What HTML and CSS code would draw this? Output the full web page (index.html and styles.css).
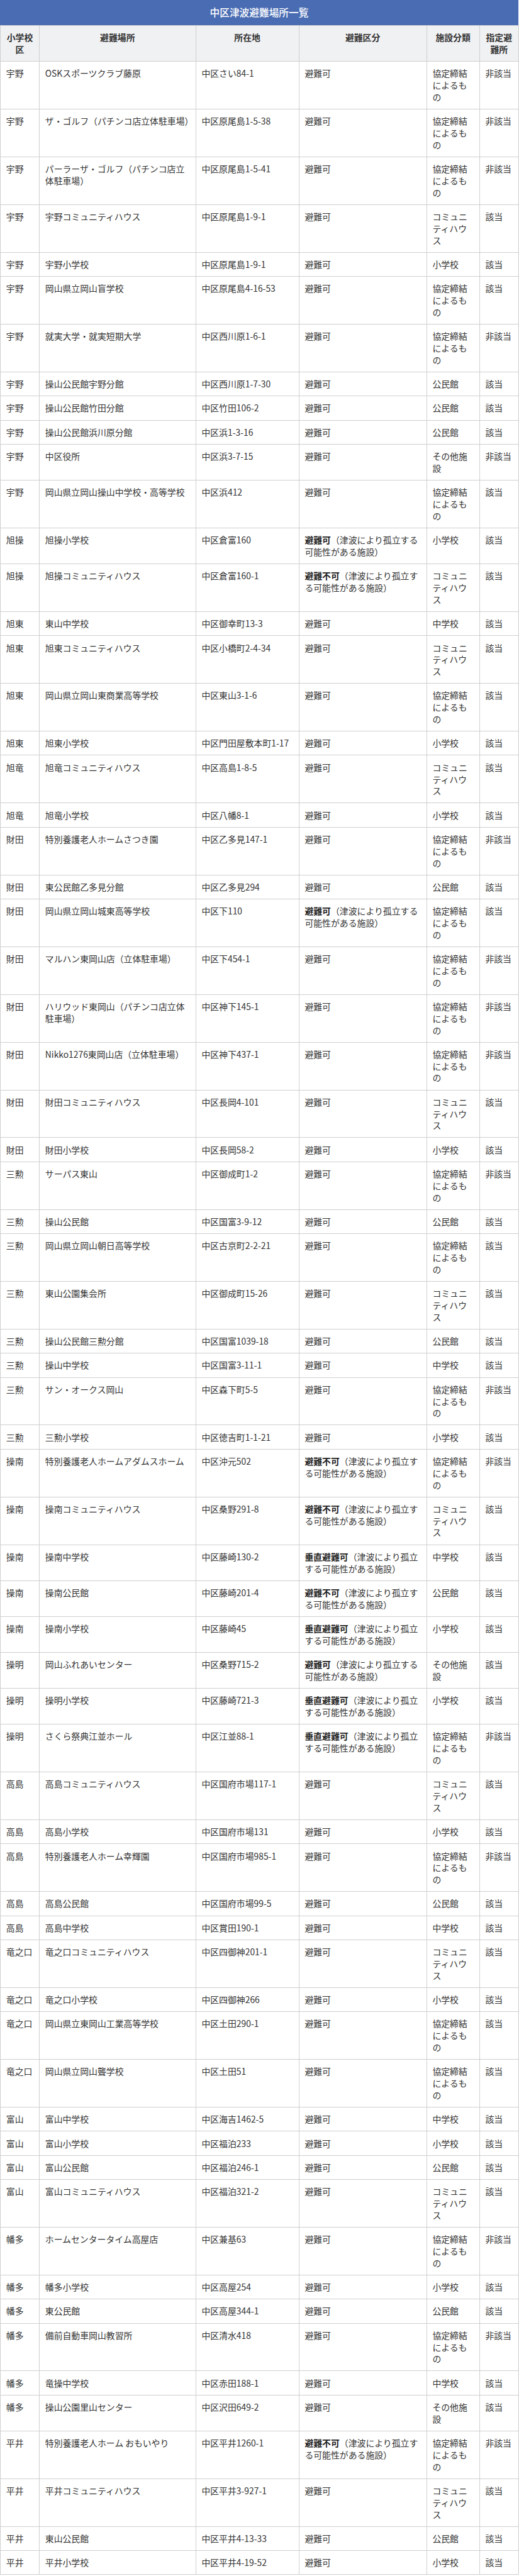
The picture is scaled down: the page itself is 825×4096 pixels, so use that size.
FILE: index.html
```html
<!DOCTYPE html>
<html lang="ja">
<head>
<meta charset="utf-8">
<title>中区津波避難場所一覧</title>
<link rel="stylesheet" href="styles.css">
</head>
<body>
<div class="wrap">
<div class="caption">中区津波避難場所一覧</div>
<table class="list">
<colgroup>
<col class="c-school"><col class="c-place"><col class="c-addr"><col class="c-kind"><col class="c-type"><col class="c-desig">
</colgroup>
<thead>
<tr><th>小学校区</th><th>避難場所</th><th>所在地</th><th>避難区分</th><th>施設分類</th><th>指定避難所</th></tr>
</thead>
<tbody>
<tr><td>宇野</td><td>OSKスポーツクラブ藤原</td><td>中区さい84-1</td><td>避難可</td><td>協定締結によるもの</td><td>非該当</td></tr>
<tr><td>宇野</td><td>ザ・ゴルフ（パチンコ店立体駐車場）</td><td>中区原尾島1-5-38</td><td>避難可</td><td>協定締結によるもの</td><td>非該当</td></tr>
<tr><td>宇野</td><td>パーラーザ・ゴルフ（パチンコ店立体駐車場）</td><td>中区原尾島1-5-41</td><td>避難可</td><td>協定締結によるもの</td><td>非該当</td></tr>
<tr><td>宇野</td><td>宇野コミュニティハウス</td><td>中区原尾島1-9-1</td><td>避難可</td><td>コミュニティハウス</td><td>該当</td></tr>
<tr><td>宇野</td><td>宇野小学校</td><td>中区原尾島1-9-1</td><td>避難可</td><td>小学校</td><td>該当</td></tr>
<tr><td>宇野</td><td>岡山県立岡山盲学校</td><td>中区原尾島4-16-53</td><td>避難可</td><td>協定締結によるもの</td><td>該当</td></tr>
<tr><td>宇野</td><td>就実大学・就実短期大学</td><td>中区西川原1-6-1</td><td>避難可</td><td>協定締結によるもの</td><td>非該当</td></tr>
<tr><td>宇野</td><td>操山公民館宇野分館</td><td>中区西川原1-7-30</td><td>避難可</td><td>公民館</td><td>該当</td></tr>
<tr><td>宇野</td><td>操山公民館竹田分館</td><td>中区竹田106-2</td><td>避難可</td><td>公民館</td><td>該当</td></tr>
<tr><td>宇野</td><td>操山公民館浜川原分館</td><td>中区浜1-3-16</td><td>避難可</td><td>公民館</td><td>該当</td></tr>
<tr><td>宇野</td><td>中区役所</td><td>中区浜3-7-15</td><td>避難可</td><td>その他施設</td><td>非該当</td></tr>
<tr><td>宇野</td><td>岡山県立岡山操山中学校・高等学校</td><td>中区浜412</td><td>避難可</td><td>協定締結によるもの</td><td>該当</td></tr>
<tr><td>旭操</td><td>旭操小学校</td><td>中区倉富160</td><td><strong>避難可</strong>（津波により孤立する可能性がある施設）</td><td>小学校</td><td>該当</td></tr>
<tr><td>旭操</td><td>旭操コミュニティハウス</td><td>中区倉富160-1</td><td><strong>避難不可</strong>（津波により孤立する可能性がある施設）</td><td>コミュニティハウス</td><td>該当</td></tr>
<tr><td>旭東</td><td>東山中学校</td><td>中区御幸町13-3</td><td>避難可</td><td>中学校</td><td>該当</td></tr>
<tr><td>旭東</td><td>旭東コミュニティハウス</td><td>中区小橋町2-4-34</td><td>避難可</td><td>コミュニティハウス</td><td>該当</td></tr>
<tr><td>旭東</td><td>岡山県立岡山東商業高等学校</td><td>中区東山3-1-6</td><td>避難可</td><td>協定締結によるもの</td><td>該当</td></tr>
<tr><td>旭東</td><td>旭東小学校</td><td>中区門田屋敷本町1-17</td><td>避難可</td><td>小学校</td><td>該当</td></tr>
<tr><td>旭竜</td><td>旭竜コミュニティハウス</td><td>中区高島1-8-5</td><td>避難可</td><td>コミュニティハウス</td><td>該当</td></tr>
<tr><td>旭竜</td><td>旭竜小学校</td><td>中区八幡8-1</td><td>避難可</td><td>小学校</td><td>該当</td></tr>
<tr><td>財田</td><td>特別養護老人ホームさつき園</td><td>中区乙多見147-1</td><td>避難可</td><td>協定締結によるもの</td><td>非該当</td></tr>
<tr><td>財田</td><td>東公民館乙多見分館</td><td>中区乙多見294</td><td>避難可</td><td>公民館</td><td>該当</td></tr>
<tr><td>財田</td><td>岡山県立岡山城東高等学校</td><td>中区下110</td><td><strong>避難可</strong>（津波により孤立する可能性がある施設）</td><td>協定締結によるもの</td><td>該当</td></tr>
<tr><td>財田</td><td>マルハン東岡山店（立体駐車場）</td><td>中区下454-1</td><td>避難可</td><td>協定締結によるもの</td><td>非該当</td></tr>
<tr><td>財田</td><td>ハリウッド東岡山（パチンコ店立体駐車場）</td><td>中区神下145-1</td><td>避難可</td><td>協定締結によるもの</td><td>非該当</td></tr>
<tr><td>財田</td><td>Nikko1276東岡山店（立体駐車場）</td><td>中区神下437-1</td><td>避難可</td><td>協定締結によるもの</td><td>非該当</td></tr>
<tr><td>財田</td><td>財田コミュニティハウス</td><td>中区長岡4-101</td><td>避難可</td><td>コミュニティハウス</td><td>該当</td></tr>
<tr><td>財田</td><td>財田小学校</td><td>中区長岡58-2</td><td>避難可</td><td>小学校</td><td>該当</td></tr>
<tr><td>三勲</td><td>サーパス東山</td><td>中区御成町1-2</td><td>避難可</td><td>協定締結によるもの</td><td>非該当</td></tr>
<tr><td>三勲</td><td>操山公民館</td><td>中区国富3-9-12</td><td>避難可</td><td>公民館</td><td>該当</td></tr>
<tr><td>三勲</td><td>岡山県立岡山朝日高等学校</td><td>中区古京町2-2-21</td><td>避難可</td><td>協定締結によるもの</td><td>該当</td></tr>
<tr><td>三勲</td><td>東山公園集会所</td><td>中区御成町15-26</td><td>避難可</td><td>コミュニティハウス</td><td>該当</td></tr>
<tr><td>三勲</td><td>操山公民館三勲分館</td><td>中区国富1039-18</td><td>避難可</td><td>公民館</td><td>該当</td></tr>
<tr><td>三勲</td><td>操山中学校</td><td>中区国富3-11-1</td><td>避難可</td><td>中学校</td><td>該当</td></tr>
<tr><td>三勲</td><td>サン・オークス岡山</td><td>中区森下町5-5</td><td>避難可</td><td>協定締結によるもの</td><td>非該当</td></tr>
<tr><td>三勲</td><td>三勲小学校</td><td>中区徳吉町1-1-21</td><td>避難可</td><td>小学校</td><td>該当</td></tr>
<tr><td>操南</td><td>特別養護老人ホームアダムスホーム</td><td>中区沖元502</td><td><strong>避難不可</strong>（津波により孤立する可能性がある施設）</td><td>協定締結によるもの</td><td>非該当</td></tr>
<tr><td>操南</td><td>操南コミュニティハウス</td><td>中区桑野291-8</td><td><strong>避難不可</strong>（津波により孤立する可能性がある施設）</td><td>コミュニティハウス</td><td>該当</td></tr>
<tr><td>操南</td><td>操南中学校</td><td>中区藤崎130-2</td><td><strong>垂直避難可</strong>（津波により孤立する可能性がある施設）</td><td>中学校</td><td>該当</td></tr>
<tr><td>操南</td><td>操南公民館</td><td>中区藤崎201-4</td><td><strong>避難不可</strong>（津波により孤立する可能性がある施設）</td><td>公民館</td><td>該当</td></tr>
<tr><td>操南</td><td>操南小学校</td><td>中区藤崎45</td><td><strong>垂直避難可</strong>（津波により孤立する可能性がある施設）</td><td>小学校</td><td>該当</td></tr>
<tr><td>操明</td><td>岡山ふれあいセンター</td><td>中区桑野715-2</td><td><strong>避難可</strong>（津波により孤立する可能性がある施設）</td><td>その他施設</td><td>該当</td></tr>
<tr><td>操明</td><td>操明小学校</td><td>中区藤崎721-3</td><td><strong>垂直避難可</strong>（津波により孤立する可能性がある施設）</td><td>小学校</td><td>該当</td></tr>
<tr><td>操明</td><td>さくら祭典江並ホール</td><td>中区江並88-1</td><td><strong>垂直避難可</strong>（津波により孤立する可能性がある施設）</td><td>協定締結によるもの</td><td>非該当</td></tr>
<tr><td>高島</td><td>高島コミュニティハウス</td><td>中区国府市場117-1</td><td>避難可</td><td>コミュニティハウス</td><td>該当</td></tr>
<tr><td>高島</td><td>高島小学校</td><td>中区国府市場131</td><td>避難可</td><td>小学校</td><td>該当</td></tr>
<tr><td>高島</td><td>特別養護老人ホーム幸輝園</td><td>中区国府市場985-1</td><td>避難可</td><td>協定締結によるもの</td><td>非該当</td></tr>
<tr><td>高島</td><td>高島公民館</td><td>中区国府市場99-5</td><td>避難可</td><td>公民館</td><td>該当</td></tr>
<tr><td>高島</td><td>高島中学校</td><td>中区賞田190-1</td><td>避難可</td><td>中学校</td><td>該当</td></tr>
<tr><td>竜之口</td><td>竜之口コミュニティハウス</td><td>中区四御神201-1</td><td>避難可</td><td>コミュニティハウス</td><td>該当</td></tr>
<tr><td>竜之口</td><td>竜之口小学校</td><td>中区四御神266</td><td>避難可</td><td>小学校</td><td>該当</td></tr>
<tr><td>竜之口</td><td>岡山県立東岡山工業高等学校</td><td>中区土田290-1</td><td>避難可</td><td>協定締結によるもの</td><td>該当</td></tr>
<tr><td>竜之口</td><td>岡山県立岡山聾学校</td><td>中区土田51</td><td>避難可</td><td>協定締結によるもの</td><td>該当</td></tr>
<tr><td>富山</td><td>富山中学校</td><td>中区海吉1462-5</td><td>避難可</td><td>中学校</td><td>該当</td></tr>
<tr><td>富山</td><td>富山小学校</td><td>中区福泊233</td><td>避難可</td><td>小学校</td><td>該当</td></tr>
<tr><td>富山</td><td>富山公民館</td><td>中区福泊246-1</td><td>避難可</td><td>公民館</td><td>該当</td></tr>
<tr><td>富山</td><td>富山コミュニティハウス</td><td>中区福泊321-2</td><td>避難可</td><td>コミュニティハウス</td><td>該当</td></tr>
<tr><td>幡多</td><td>ホームセンタータイム高屋店</td><td>中区兼基63</td><td>避難可</td><td>協定締結によるもの</td><td>非該当</td></tr>
<tr><td>幡多</td><td>幡多小学校</td><td>中区高屋254</td><td>避難可</td><td>小学校</td><td>該当</td></tr>
<tr><td>幡多</td><td>東公民館</td><td>中区高屋344-1</td><td>避難可</td><td>公民館</td><td>該当</td></tr>
<tr><td>幡多</td><td>備前自動車岡山教習所</td><td>中区清水418</td><td>避難可</td><td>協定締結によるもの</td><td>非該当</td></tr>
<tr><td>幡多</td><td>竜操中学校</td><td>中区赤田188-1</td><td>避難可</td><td>中学校</td><td>該当</td></tr>
<tr><td>幡多</td><td>操山公園里山センター</td><td>中区沢田649-2</td><td>避難可</td><td>その他施設</td><td>該当</td></tr>
<tr><td>平井</td><td>特別養護老人ホーム おもいやり</td><td>中区平井1260-1</td><td><strong>避難不可</strong>（津波により孤立する可能性がある施設）</td><td>協定締結によるもの</td><td>非該当</td></tr>
<tr><td>平井</td><td>平井コミュニティハウス</td><td>中区平井3-927-1</td><td>避難可</td><td>コミュニティハウス</td><td>該当</td></tr>
<tr><td>平井</td><td>東山公民館</td><td>中区平井4-13-33</td><td>避難可</td><td>公民館</td><td>該当</td></tr>
<tr><td>平井</td><td>平井小学校</td><td>中区平井4-19-52</td><td>避難可</td><td>小学校</td><td>該当</td></tr>
</tbody>
</table>
</div>
</body>
</html>
```

FILE: styles.css
```css
html, body {
  margin: 0;
  padding: 0;
  background: #ffffff;
}

body {
  font-family: "Noto Sans CJK JP", "Noto Sans", sans-serif;
  color: #333333;
}

.wrap {
  width: 824px;
}

.caption {
  background: #4a6cb3;
  color: #ffffff;
  height: 40px;
  line-height: 40px;
  text-align: center;
  font-size: 15.7px;
  font-weight: 500;
}

.list {
  width: 824px;
  border-collapse: collapse;
  table-layout: fixed;
}

.c-school { width: 62px; }
.c-place { width: 248.6px; }
.c-addr { width: 164px; }
.c-kind { width: 203px; }
.c-type { width: 84px; }
.c-desig { width: 62.4px; }

.list th,
.list td {
  border: 1px solid #cfcfcf;
  padding: 9.3px 8.8px;
  font-size: 13.86px;
  line-height: 18.76px;
  vertical-align: top;
  text-align: left;
  word-break: break-all;
}

.list th {
  background: #f0f1f3;
  font-weight: bold;
  text-align: center;
  color: #333333;
}

.list td strong {
  font-weight: bold;
  color: #222222;
}
```
